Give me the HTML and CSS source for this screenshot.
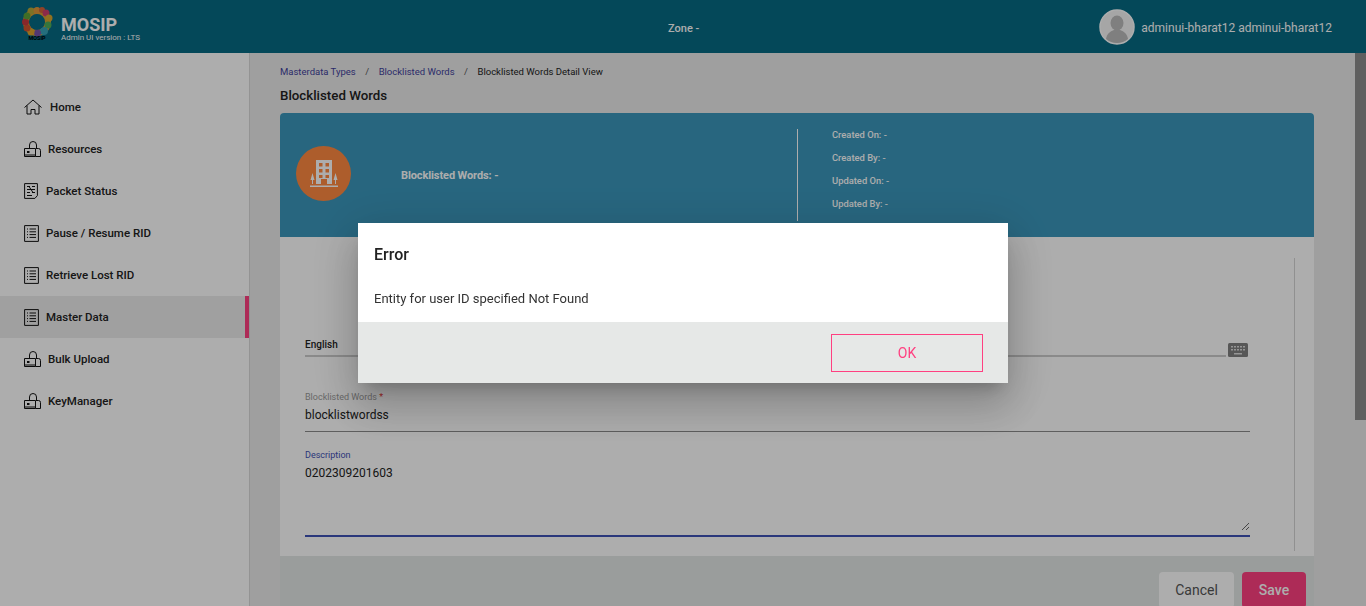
FILE: index.html
```html
<!DOCTYPE html>
<html lang="en">
<head>
    <meta charset="UTF-8">
    <title>MOSIP Admin</title>
    <link rel="stylesheet" href="styles.css">
</head>
<body>
    <header class="topbar">
        <div class="brand">
            <svg class="brand_logo" viewBox="0 0 32 36" width="32" height="36">
                <circle cx="16" cy="16" r="11" fill="none" stroke="#d8a032" stroke-width="6"/>
                <circle cx="10" cy="5" r="3.500" fill="#b7a83a"/>
                <circle cx="16" cy="4.500" r="3.500" fill="#e0983a"/>
                <circle cx="21" cy="4" r="3" fill="#d4623a"/>
                <circle cx="25" cy="7" r="3.500" fill="#cf3f6c"/>
                <circle cx="28" cy="12" r="3.500" fill="#d9a52e"/>
                <circle cx="27" cy="19" r="3.500" fill="#4fae5a"/>
                <circle cx="23" cy="25" r="4" fill="#37a3b8"/>
                <circle cx="16.500" cy="27" r="3.500" fill="#7a52a8"/>
                <circle cx="10" cy="26" r="3.500" fill="#e0a32c"/>
                <circle cx="6" cy="22" r="3.500" fill="#d2542f"/>
                <circle cx="4.500" cy="16" r="3.500" fill="#c93a40"/>
                <circle cx="6" cy="10" r="3.500" fill="#5fa238"/>
                <circle cx="16" cy="16" r="7.500" fill="#066a84"/>
                <text class="brand_tiny" x="16" y="34" text-anchor="middle">MOSIP</text>
            </svg>
            <div class="brand_text">
                <div class="brand_name">MOSIP</div>
                <div class="brand_ver">Admin UI version : LTS</div>
            </div>
        </div>
        <div class="zone">Zone -</div>
        <div class="user">
            <svg class="user_pic" viewBox="0 0 36 36" width="36" height="36">
                <circle cx="18" cy="18" r="17" fill="#f5f5f5" stroke="#fff" stroke-width="1.500"/>
                <ellipse cx="18" cy="14" rx="6.500" ry="7.500" fill="#bbb"/>
                <path d="M7 30c1-6 5-8 8-9h6c3 1 7 3 8 9a17 17 0 0 1-22 0z" fill="#bbb"/>
            </svg>
            <span class="user_name">adminui-bharat12 adminui-bharat12</span>
        </div>
    </header>

    <div class="page">
        <nav class="side">
            <a class="side_item">
                <svg class="ico lbl8" width="18" height="16" viewBox="0 0 18 16"><path d="M.5 8.500 9 1l8.500 7.500M3 6.500V15h4v-4.500h4V15h4V6.500"/></svg>
                <span>Home</span>
            </a>
            <a class="side_item">
                <svg class="ico lbl7" width="17" height="17" viewBox="0 0 17 17"><path d="M.5 7.500h11v8H.5zM.5 14h11M5.500 7.500V4a3.500 3.500 0 0 1 7 0v3.500M12 7.500h2.500a2 2 0 0 1 2 2v6h-5"/><path class="ico_dot" d="M3 10h2.500v2H3z"/></svg>
                <span>Resources</span>
            </a>
            <a class="side_item">
                <svg class="ico lbl8" width="14" height="16" viewBox="0 0 14 16"><path d="M.6.600h12.800v12l-2.500 2.800H.6zM3 3.500h3M8 3.500h3M3 6.500h8M3 9.500h3M8 9.500h3M3 12.500h5M5 3.500l4 6"/></svg>
                <span>Packet Status</span>
            </a>
            <a class="side_item">
                <svg class="ico lbl7" width="15" height="17" viewBox="0 0 15 17"><path d="M.6.600h13.800v15.800H.6zM3 4h1M5.500 4H12M3 6.800h1M5.500 6.800H12M3 9.600h1M5.500 9.600H12M3 12.400h1M5.500 12.400H12"/></svg>
                <span>Pause / Resume RID</span>
            </a>
            <a class="side_item">
                <svg class="ico lbl7" width="15" height="17" viewBox="0 0 15 17"><path d="M.6.600h13.800v15.800H.6zM3 4h1M5.500 4H12M3 6.800h1M5.500 6.800H12M3 9.600h1M5.500 9.600H12M3 12.400h1M5.500 12.400H12"/></svg>
                <span>Retrieve Lost RID</span>
            </a>
            <a class="side_item active">
                <svg class="ico lbl7" width="15" height="17" viewBox="0 0 15 17"><path d="M.6.600h13.800v15.800H.6zM3 4h1M5.500 4H12M3 6.800h1M5.500 6.800H12M3 9.600h1M5.500 9.600H12M3 12.400h1M5.500 12.400H12"/></svg>
                <span>Master Data</span>
            </a>
            <a class="side_item">
                <svg class="ico lbl7" width="17" height="17" viewBox="0 0 17 17"><path d="M.5 7.500h11v8H.5zM.5 14h11M5.500 7.500V4a3.500 3.500 0 0 1 7 0v3.500M12 7.500h2.500a2 2 0 0 1 2 2v6h-5"/><path class="ico_dot" d="M3 10h2.500v2H3z"/></svg>
                <span>Bulk Upload</span>
            </a>
            <a class="side_item">
                <svg class="ico lbl7" width="17" height="17" viewBox="0 0 17 17"><path d="M.5 7.500h11v8H.5zM.5 14h11M5.500 7.500V4a3.500 3.500 0 0 1 7 0v3.500M12 7.500h2.500a2 2 0 0 1 2 2v6h-5"/><path class="ico_dot" d="M3 10h2.500v2H3z"/></svg>
                <span>KeyManager</span>
            </a>
        </nav>

        <main class="content">
            <div class="crumbs">
                <a>Masterdata Types</a><span class="sep">/</span><a>Blocklisted Words</a><span class="sep">/</span><span>Blocklisted Words Detail View</span>
            </div>
            <h1 class="title">Blocklisted Words</h1>

            <section class="card">
                <div class="card_head">
                    <div class="head_left">
                        <div class="head_icon">
                            <svg viewBox="0 0 28 28" width="28" height="28">
                                <path fill-rule="evenodd" d="M6 0h16v24h-5v-5h-6v5H6zM9 3v3.500h3.500V3zM15.500 3v3.500H19V3zM9 9v3.500h3.500V9zM15.500 9v3.500H19V9zM9 15v3h3.500v-3zM15.500 15v3H19v-3z"/>
                                <path d="M2.500 13l2 7H3v4H2v-4H.5zM25.500 13l2 7H26v4h-1v-4h-1.500zM0 25.500h28V27H0z"/>
                            </svg>
                        </div>
                        <div class="head_name">Blocklisted Words: -</div>
                    </div>
                    <div class="head_meta">
                        <div>Created On: -</div>
                        <div>Created By: -</div>
                        <div>Updated On: -</div>
                        <div>Updated By: -</div>
                    </div>
                </div>

                <div class="card_body">
                    <div class="form">
                        <div class="lang_row">
                            <div class="lang_sel">English</div>
                            <svg class="kbd" viewBox="0 0 20 14" width="20" height="14">
                                <rect width="20" height="14" rx="1.500" fill="#808080"/>
                                <path d="M3 3h2v1.500H3zM6 3h2v1.500H6zM9 3h2v1.500H9zM12 3h2v1.500h-2zM15 3h2v1.500h-2zM3 6h2v1.500H3zM6 6h2v1.500H6zM9 6h2v1.500H9zM12 6h2v1.500h-2zM15 6h2v1.500h-2zM6 10h8v1.500H6z" fill="#ddd"/>
                            </svg>
                        </div>
                        <div class="field">
                            <label class="field_lbl">Blocklisted Words <b>*</b></label>
                            <div class="field_val">blocklistwordss</div>
                        </div>
                        <div class="field field_on">
                            <label class="field_lbl" for="desc">Description</label>
                            <div class="field_wrap">
                                <textarea class="field_area" id="desc">0202309201603</textarea>
                            </div>
                        </div>
                    </div>
                </div>

                <div class="card_foot">
                    <button class="btn btn_cancel">Cancel</button>
                    <button class="btn btn_save">Save</button>
                </div>
            </section>
        </main>

        <div class="scroll"><div class="scroll_thumb"></div></div>
    </div>

    <div class="overlay"></div>

    <div class="dialog">
        <div class="dialog_top">
            <h2 class="dialog_title">Error</h2>
            <p class="dialog_msg">Entity for user ID specified Not Found</p>
        </div>
        <div class="dialog_foot">
            <button class="dialog_ok">OK</button>
        </div>
    </div>
</body>
</html>
```

FILE: styles.css
```css
* {
    box-sizing: border-box;
}
html, body {
    height: 100%;
}
body {
    margin: 0;
    overflow: hidden;
    font-family: Roboto, "Liberation Sans", sans-serif;
    background-color: #ebebeb;
    display: flex;
    flex-direction: column;
}

/* top bar */
.topbar {
    height: 53px;
    flex: none;
    background-color: #066a84;
    color: #fff;
    display: flex;
    align-items: center;
    padding: 0 34px 0 21px;
    position: relative;
}
.brand {
    display: flex;
    align-items: center;
    width: 647px;
}
.brand_logo {
    flex: none;
    margin: 0 8px 5px 0;
}
.brand_tiny {
    font-size: 5.500px;
    font-weight: 700;
    fill: #000;
}
.brand_text {
    margin-top: 6px;
}
.brand_name {
    font-size: 18px;
    font-weight: 700;
    line-height: 16px;
}
.brand_ver {
    font-size: 8px;
    line-height: 9px;
}
.zone {
    font-size: 11px;
    font-weight: 500;
    margin-top: 4px;
}
.user {
    margin-left: auto;
    display: flex;
    align-items: center;
    gap: 6px;
}
.user_name {
    font-size: 12px;
    margin-top: 3px;
}

/* page */
.page {
    flex: 1;
    min-height: 0;
    display: flex;
}
.side {
    width: 250px;
    flex: none;
    background-color: #fff;
    border-right: 1px solid #d9d9d9;
    padding-top: 33px;
}
.side_item {
    height: 42px;
    padding-left: 24px;
    display: flex;
    align-items: center;
    color: #222;
    font-size: 11.500px;
    font-weight: 500;
}
.side_item.active {
    background-color: #ececec;
    border-right: 4px solid #ff4081;
}
.ico {
    flex: none;
    fill: none;
    stroke: #111;
    stroke-width: 1;
}
.ico_dot {
    fill: #111;
    stroke: none;
}
.lbl7 {
    margin-right: 7px;
}
.lbl8 {
    margin-right: 8px;
}

.content {
    flex: 1;
    min-width: 0;
    padding: 0 41px 0 30px;
}
.crumbs {
    font-size: 9.500px;
    line-height: 12px;
    padding-top: 13px;
    color: #222;
}
.crumbs a {
    color: #3f3f9c;
}
.sep {
    margin: 0 9.500px;
    color: #555;
}
.title {
    margin: 9px 0 0;
    font-size: 13.300px;
    line-height: 18px;
    font-weight: 500;
    color: #222;
}
.card {
    margin-top: 8px;
    background-color: #fff;
    border-radius: 4px 4px 0 0;
}
.card_head {
    height: 124px;
    padding: 16px;
    background-color: #3b97bc;
    border-radius: 4px 4px 0 0;
    display: flex;
    color: #fff;
}
.head_left {
    width: 501px;
    flex: none;
    display: flex;
    align-items: center;
}
.head_icon {
    width: 55px;
    height: 55px;
    border-radius: 50%;
    background-color: #ff8a42;
    display: flex;
    align-items: center;
    justify-content: center;
    margin: 0 50px 3px 0;
}
.head_icon svg {
    fill: #fff;
}
.head_name {
    font-size: 11px;
    font-weight: 700;
    letter-spacing: -.1px;
}
.head_meta {
    border-left: 1px solid #fff;
    padding-left: 34px;
    font-size: 9.400px;
    font-weight: 500;
    line-height: 12px;
    height: 92px;
    display: flex;
    flex-direction: column;
    gap: 11px;
}
.card_body {
    height: 319px;
    padding: 21px 19px 5px 25px;
    display: flex;
}
.form {
    flex: 1;
    padding: 77px 44px 0 0;
    border-right: 1px solid #d4d4d4;
}
.lang_row {
    display: flex;
    align-items: flex-end;
    gap: 2px;
}
.lang_sel {
    flex: 1;
    height: 22px;
    padding-top: 4px;
    font-size: 10px;
    font-weight: 500;
    color: #222;
    border-bottom: 2px solid #ccc;
}
.kbd {
    flex: none;
    margin-right: 2px;
}
.field {
    margin-top: 35px;
}
.field_lbl {
    display: block;
    font-size: 9px;
    line-height: 11px;
    color: #9a9a9a;
}
.field_lbl b {
    color: #e53935;
    font-weight: 400;
}
.field_val {
    font-size: 12px;
    line-height: 14px;
    color: #222;
    height: 25px;
    padding-top: 1px;
    margin-top: 4px;
    border-bottom: 1px solid #8b8b8b;
}
.field_on {
    margin-top: 18px;
}
.field_on .field_lbl {
    color: #3f51b5;
}
.field_wrap {
    margin-top: 5px;
    padding-bottom: 4px;
    border-bottom: 2px solid #3f51b5;
}
.field_area {
    display: block;
    width: 100%;
    height: 65px;
    padding: 0;
    border: 0;
    outline: 0;
    background: transparent;
    font-family: Roboto, "Liberation Sans", sans-serif;
    font-size: 12px;
    line-height: 14px;
    color: #222;
}
.card_foot {
    height: 60px;
    background-color: #e4e7e6;
    padding: 16px 8px 0 0;
    display: flex;
    justify-content: flex-end;
    gap: 8px;
    align-items: flex-start;
}
.btn {
    height: 36px;
    border: 0;
    border-radius: 4px;
    font-family: Roboto, "Liberation Sans", sans-serif;
    font-size: 14px;
}
.btn_cancel {
    width: 75px;
    background-color: #fff;
    color: #555;
}
.btn_save {
    width: 64px;
    background-color: #ff4081;
    color: #fff;
    font-weight: 500;
}

/* scrollbar */
.scroll {
    width: 11px;
    flex: none;
    background-color: #ebebeb;
}
.scroll_thumb {
    height: 367px;
    background-color: #8c8c8c;
}

/* dialog over everything */
.overlay {
    position: fixed;
    left: 0;
    top: 0;
    right: 0;
    bottom: 0;
    background-color: rgba(0, 0, 0, .32);
}
.dialog {
    position: fixed;
    left: 358px;
    top: 223px;
    width: 650px;
    height: 160px;
    background-color: #fff;
    box-shadow: 0 11px 15px -7px rgba(0, 0, 0, .2), 0 24px 38px 3px rgba(0, 0, 0, .14), 0 9px 46px 8px rgba(0, 0, 0, .12);
}
.dialog_top {
    height: 99px;
    padding: 22px 16px 0;
}
.dialog_title {
    margin: 0;
    font-size: 16px;
    line-height: 20px;
    font-weight: 500;
    color: #222;
}
.dialog_msg {
    margin: 26px 0 0;
    font-size: 13px;
    line-height: 16px;
    color: #333;
}
.dialog_foot {
    height: 61px;
    background-color: #e6e8e7;
    padding: 12px 25px 0 0;
    display: flex;
    justify-content: flex-end;
}
.dialog_ok {
    width: 152px;
    height: 38px;
    background: transparent;
    border: 1px solid #ff4081;
    color: #ff4081;
    font-family: Roboto, "Liberation Sans", sans-serif;
    font-size: 14px;
}
```
